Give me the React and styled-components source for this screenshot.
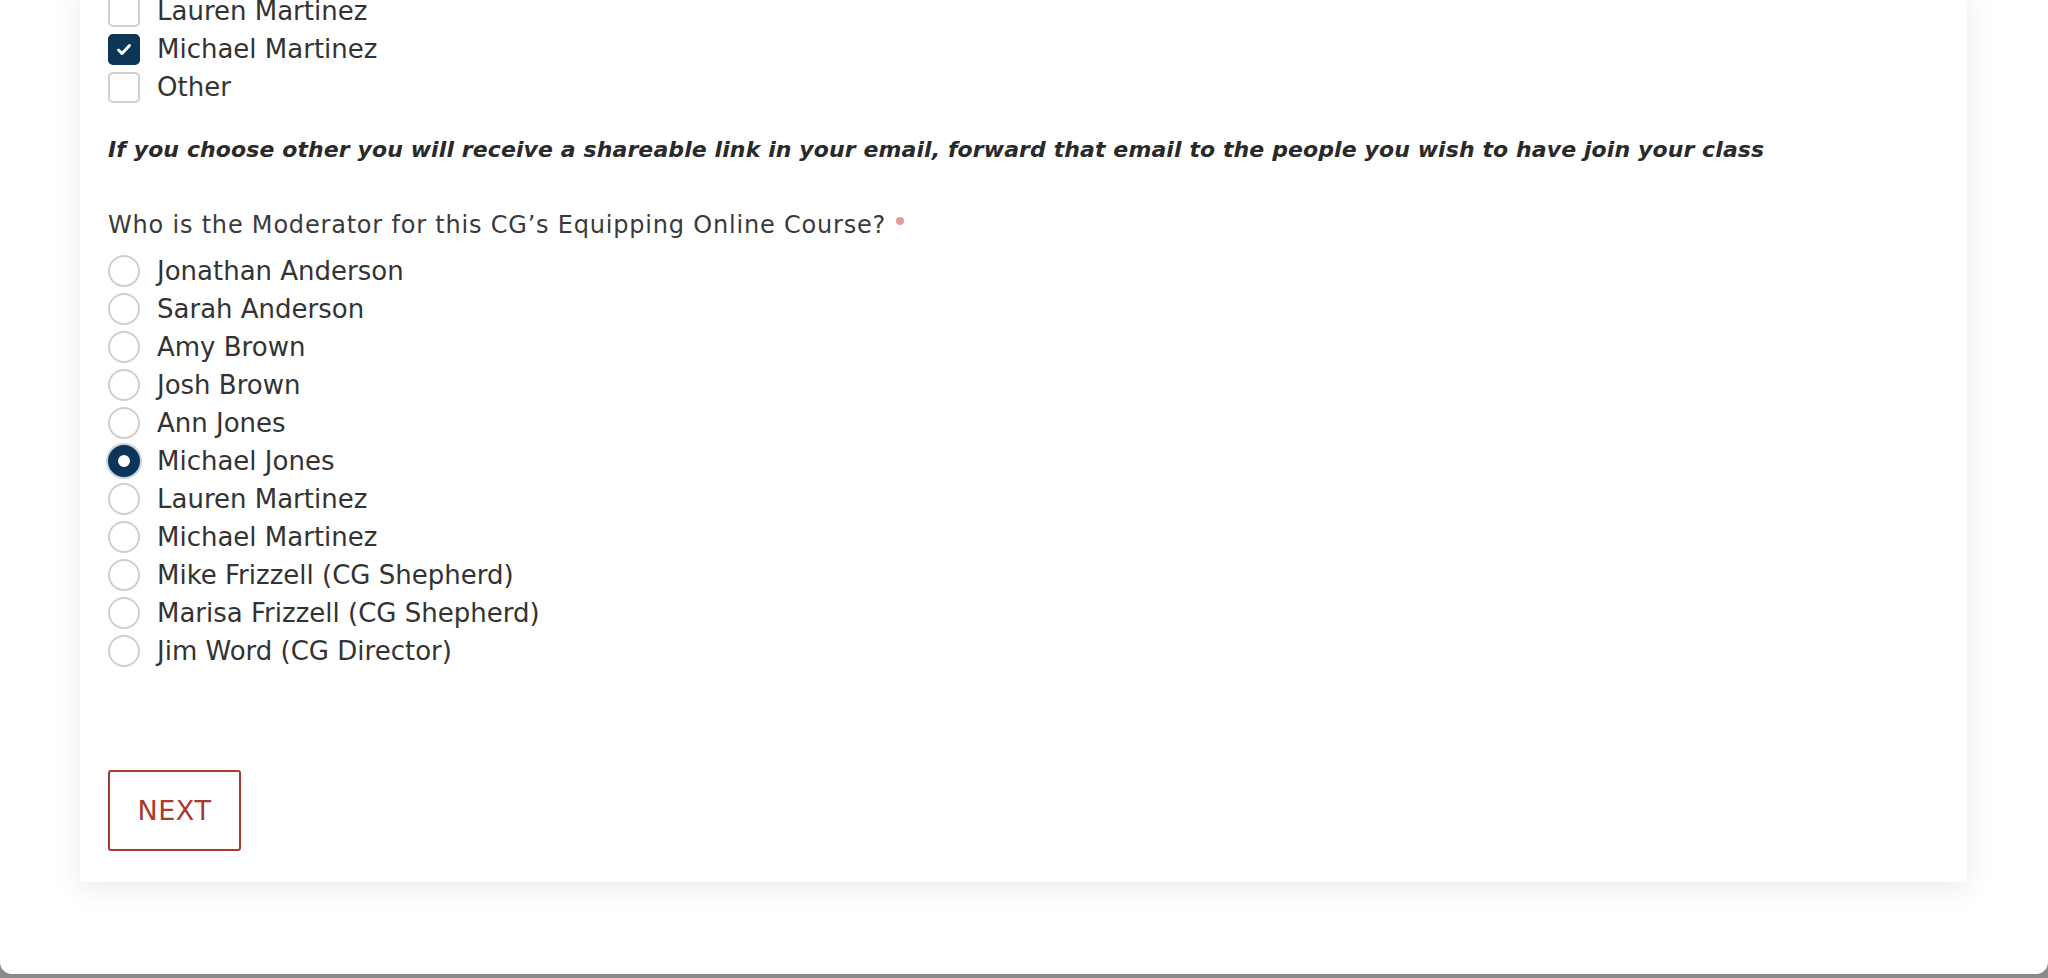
import React, { useState } from 'react'
import styled, { createGlobalStyle } from 'styled-components'

const GlobalStyle = createGlobalStyle`
  html, body {
    margin: 0;
    padding: 0;
    background: #8a8a8a;
  }
  body {
    font-family: "DejaVu Sans", "Liberation Sans", sans-serif;
    color: #333;
    overflow: hidden;
  }
`

const classmates = [
  'Lauren Martinez',
  'Michael Martinez',
  'Other',
]

const moderators = [
  'Jonathan Anderson',
  'Sarah Anderson',
  'Amy Brown',
  'Josh Brown',
  'Ann Jones',
  'Michael Jones',
  'Lauren Martinez',
  'Michael Martinez',
  'Mike Frizzell (CG Shepherd)',
  'Marisa Frizzell (CG Shepherd)',
  'Jim Word (CG Director)',
]

export default function App() {
  const [checked, setChecked] = useState(['Michael Martinez'])
  const [moderator, setModerator] = useState('Michael Jones')

  const toggle = (name) => {
    setChecked((prev) =>
      prev.includes(name) ? prev.filter((n) => n !== name) : [...prev, name]
    )
  }

  return (
    <>
      <GlobalStyle />
      <Page>
        <Window>
          <Card>
            <OptionList>
              {classmates.map((name) => (
                <OptionRow key={name} onClick={() => toggle(name)}>
                  <CheckBox $on={checked.includes(name)}>
                    {checked.includes(name) && (
                      <svg width="16" height="13" viewBox="0 0 16 13">
                        <polyline
                          points="2.5,7 6,10.5 13.5,2.5"
                          fill="none"
                          stroke="#fff"
                          strokeWidth="3"
                          strokeLinecap="round"
                          strokeLinejoin="round"
                        />
                      </svg>
                    )}
                  </CheckBox>
                  <OptionLabel>{name}</OptionLabel>
                </OptionRow>
              ))}
            </OptionList>

            <Note>
              If you choose other you will receive a shareable link in your email, forward that email to the people you wish to have join your class
            </Note>

            <Question>
              Who is the Moderator for this CG’s Equipping Online Course?
              <Required />
            </Question>

            <RadioList>
              {moderators.map((name) => (
                <OptionRow key={name} onClick={() => setModerator(name)}>
                  <Radio $on={moderator === name} />
                  <OptionLabel>{name}</OptionLabel>
                </OptionRow>
              ))}
            </RadioList>

            <NextButton>NEXT</NextButton>
          </Card>
        </Window>
      </Page>
    </>
  )
}

const Page = styled.div`
  height: 978px;
  display: flex;
  flex-direction: column;
  overflow: hidden;
`

const Window = styled.div`
  height: 974px;
  background: #fff;
  border-radius: 0 0 12px 12px;
  padding: 0 81px 0 80px;
  overflow: hidden;
`

const Card = styled.div`
  margin-top: -8px;
  background: #fff;
  box-shadow: 0 6px 28px rgba(0, 0, 0, 0.09);
  padding: 0 28px 31px;
  display: flex;
  flex-direction: column;
  align-items: flex-start;
`

const OptionList = styled.div`
  display: flex;
  flex-direction: column;
`

const RadioList = styled(OptionList)`
  margin-top: 12px;
`

const OptionRow = styled.label`
  height: 38px;
  display: flex;
  align-items: center;
  gap: 17px;
  cursor: pointer;
`

const CheckBox = styled.span`
  width: 32px;
  height: 31px;
  box-sizing: border-box;
  border-radius: 5px;
  border: 2px solid ${(p) => (p.$on ? '#0c3558' : '#cfcfcf')};
  background: ${(p) => (p.$on ? '#0c3558' : '#fff')};
  display: flex;
  align-items: center;
  justify-content: center;
  flex-shrink: 0;
`

const Radio = styled.span`
  width: 32px;
  height: 32px;
  box-sizing: border-box;
  border-radius: 50%;
  flex-shrink: 0;
  border: ${(p) => (p.$on ? '10.5px solid #0c3558' : '2px solid #cfcfcf')};
  background: #fff;
  box-shadow: ${(p) => (p.$on ? '0 0 0 2px #c9d3dc' : 'none')};
`

const OptionLabel = styled.span`
  font-size: 26px;
  line-height: 38px;
  color: #333;
  white-space: nowrap;
`

const Note = styled.p`
  margin: 29px 0 0;
  font-size: 22px;
  line-height: 30px;
  font-style: italic;
  font-weight: 700;
  letter-spacing: 0.1px;
  color: #2a2a2a;
`

const Question = styled.div`
  margin-top: 45px;
  font-size: 24px;
  line-height: 30px;
  letter-spacing: 0.8px;
  color: #3a3a3a;
  display: flex;
  align-items: flex-start;
`

const Required = styled.span`
  width: 8px;
  height: 8px;
  border-radius: 50%;
  background: #e79a98;
  margin: 7px 0 0 10px;
`

const NextButton = styled.button`
  margin-top: 100px;
  width: 133px;
  height: 81px;
  border: 2px solid #a83a2e;
  border-radius: 3px;
  background: #fff;
  color: #a83a2e;
  font-family: "DejaVu Sans", "Liberation Sans", sans-serif;
  font-size: 27px;
  letter-spacing: 0.5px;
  cursor: pointer;
`
